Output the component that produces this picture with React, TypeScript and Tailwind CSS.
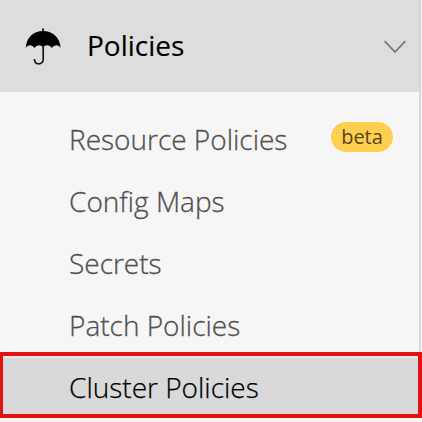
const items = ["Resource Policies", "Config Maps", "Secrets", "Patch Policies"];

export default function App() {
  return (
    <div className="flex h-[422px] w-[422px] flex-col overflow-hidden bg-[#f6f6f6] font-['Open_Sans',sans-serif]">
      <div className="mr-px flex h-[92px] shrink-0 items-center border-r-2 border-[#d6d6d6] bg-[#dddddd] pl-[25px] pr-[13px]">
        <svg className="mt-[2px] h-[38px] w-[36px]" viewBox="25 28 36 38">
          <path d="M43 31C33 31 26.1 38 25.8 48C27.5 44.6 31.8 44.4 34.5 48C36.8 44.4 40.8 44.4 43.2 47.2C45.4 44.4 49.6 44.4 51.8 48C54.5 44.4 58.9 44.6 60.6 48C60.3 38 53 31 43 31Z" />
          <path d="M43 28.5V32" stroke="black" strokeWidth="1.7" />
          <path d="M43.2 46V59.5C43.2 65.2 34.4 65.4 34.4 59" fill="none" stroke="#1a1a1a" strokeWidth="1.7" />
        </svg>
        <span className="-mt-[2px] ml-[26px] text-[28px] text-black [-webkit-text-stroke:0.15px_black]">Policies</span>
        <svg className="ml-auto mt-[2px] h-[14px] w-[22px]" viewBox="0 0 22 14" fill="none" stroke="#747474" strokeWidth="1.7">
          <path d="M.7 1.2 11 12 21.3 1.2" />
        </svg>
      </div>
      <div className="mr-px flex h-[260px] shrink-0 flex-col border-r-2 border-[#d8d8d8] pt-4">
        {items.map((item) => (
          <div key={item} className="flex h-[62px] shrink-0 items-center pl-[69px] text-[28px] font-light text-[#505050] [-webkit-text-stroke:0.3px_#505050]">
            <span className="whitespace-nowrap">{item}</span>
            {item === "Resource Policies" && (
              <span className="-mt-1 ml-auto mr-[26px] flex h-[30px] w-[62px] items-center justify-center rounded-full bg-[#ffcf4f] text-[20px] font-normal text-[#574415] [-webkit-text-stroke:0px]">beta</span>
            )}
          </div>
        ))}
      </div>
      <div className="h-[66px] shrink-0 border-4 border-l-[3px] border-[#e01212]">
        <div className="flex h-full items-center border-t-2 border-t-[#f5e4e4] bg-[#d9d9d9] pl-[66px] pt-[2px] text-[28px] font-light text-black [-webkit-text-stroke:0.25px_black]">
          Cluster Policies
        </div>
      </div>
    </div>
  );
}
